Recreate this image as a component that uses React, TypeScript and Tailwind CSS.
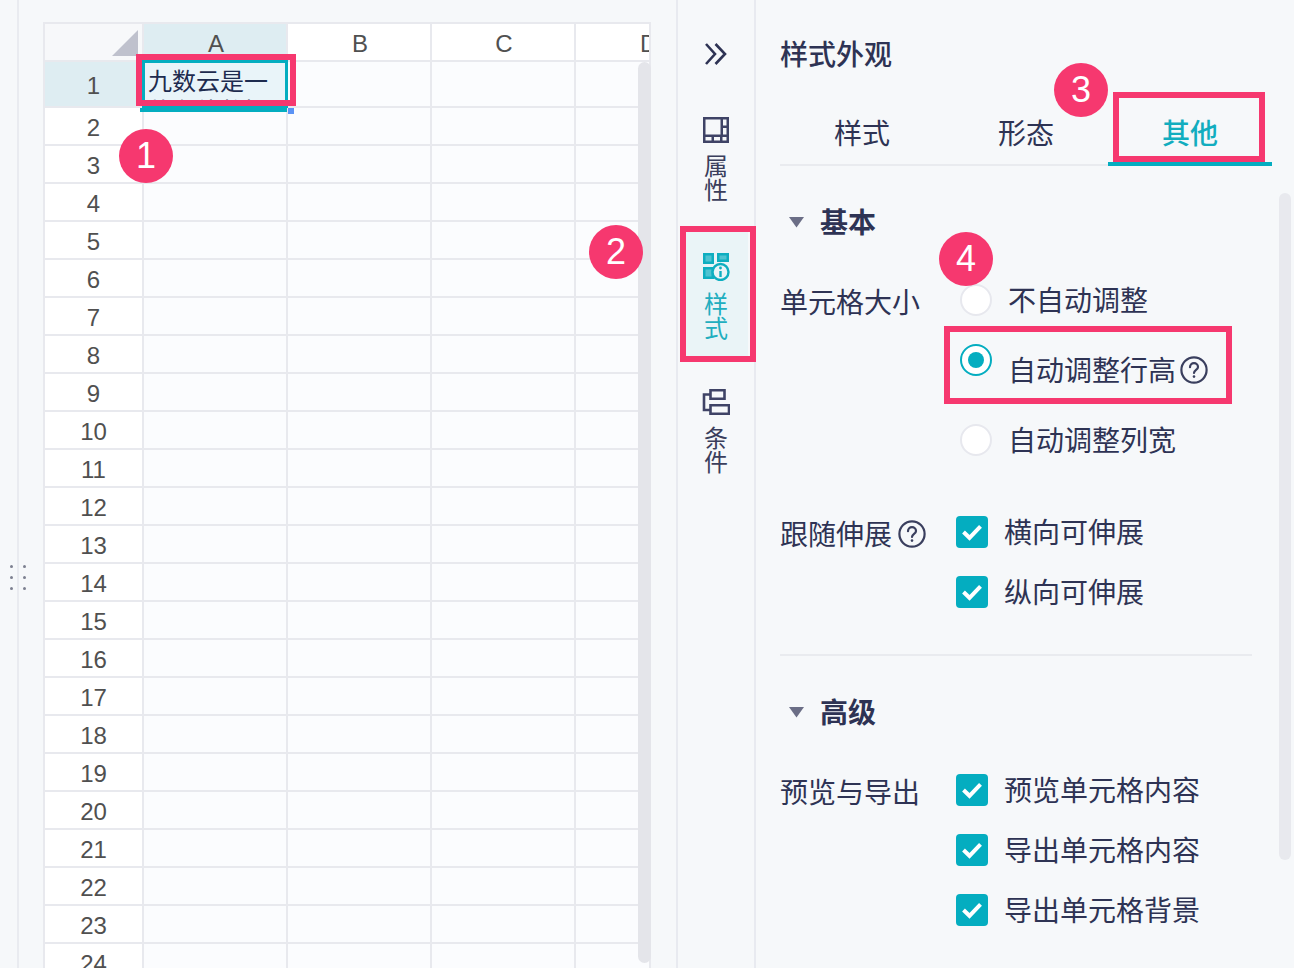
const FONT = "font-['Noto_Sans_CJK_SC','Noto_Sans',sans-serif]";

function Badge({ n, cls }: { n: number; cls: string }) {
  return (
    <div className={`absolute w-[54px] h-[54px] rounded-full bg-[#f6386f] text-white flex items-center justify-center text-[36px] font-['Liberation_Sans',sans-serif] ${cls}`}>
      {n}
    </div>
  );
}

function Help({ cls = "" }: { cls?: string }) {
  return (
    <svg width="28" height="28" viewBox="0 0 28 28" fill="none" stroke="#3a3f5e" strokeWidth="2.2" className={`shrink-0 ${cls}`}>
      <circle cx="14" cy="14" r="12.6" />
      <path d="M10 11.2c0-2.4 1.8-4 4-4s4 1.6 4 3.7c0 2.8-4 3-4 6" strokeLinecap="round" />
      <circle cx="14" cy="20.6" r="1.3" fill="#3a3f5e" stroke="none" />
    </svg>
  );
}

function Check({ label }: { label: string }) {
  return (
    <div className="flex items-center h-8 gap-4">
      <div className="w-8 h-8 rounded-[4px] bg-[#04adc0] flex items-center justify-center">
        <svg width="22" height="18" viewBox="0 0 22 18" fill="none" stroke="#fff" strokeWidth="4">
          <path d="M2.500 9l6 5.800L19.500 3.400" />
        </svg>
      </div>
      <span className="text-[28px] leading-9 mb-[2px] text-[#2e3354]">{label}</span>
    </div>
  );
}

function Radio() {
  return <div className="w-8 h-8 rounded-full bg-white border-2 border-[#e7e8ee] shrink-0" />;
}

function SectionHead({ title }: { title: string }) {
  return (
    <div className="flex items-center h-9">
      <svg width="16" height="11" viewBox="0 0 16 11" className="ml-[9px]">
        <path d="M0 0h15L7.5 10.5z" fill="#6b6e86" />
      </svg>
      <span className="ml-[15px] mb-[2px] text-[28px] font-bold text-[#2e3354] leading-9">{title}</span>
    </div>
  );
}

const rows = Array.from({ length: 24 }, (_, i) => i + 1);

function Sheet() {
  return (
    <div className="w-[608px] h-[946px] overflow-hidden border-l-2 border-t-2 border-[#e8e9ee] bg-white relative">
      <div className="grid grid-cols-[99px_144px_144px_144px_75px] font-['Liberation_Sans',sans-serif] text-[#505050]">
        <div className="h-[38px] bg-[#f7f8fa] border-r-2 border-b-2 border-[#e8e9ee] relative">
          <svg width="26" height="26" viewBox="0 0 26 26" className="absolute left-[67px] top-[6px]">
            <path d="M26 0v26H0z" fill="#bfc1cd" />
          </svg>
        </div>
        <div className="h-[38px] bg-[#deedf2] border-r-2 border-b-2 border-[#e8e9ee] text-[24px] leading-10 text-center pl-[2px]">A</div>
        <div className="h-[38px] border-r-2 border-b-2 border-[#e8e9ee] text-[24px] leading-10 text-center pl-[2px]">B</div>
        <div className="h-[38px] border-r-2 border-b-2 border-[#e8e9ee] text-[24px] leading-10 text-center pl-[2px]">C</div>
        <div className="h-[38px] border-r-2 border-b-2 border-[#e8e9ee] text-[24px] leading-10 overflow-hidden pl-[64px]">D</div>
        {rows.map((r) => (
          <div key={r} className="contents">
            <div className={`border-r-2 border-b-2 border-[#e8e9ee] text-[24px] flex items-center justify-center pt-1 ${r === 1 ? "h-[46px] bg-[#deedf2]" : "h-[38px] bg-white"}`}>
              {r}
            </div>
            {[0, 1, 2, 3].map((c) =>
              r === 1 && c === 0 ? (
                <div key={c} className={`h-[46px] bg-[#e9f4f9] border-r-2 border-b-2 border-[#e8e9ee] overflow-hidden pl-[4px] text-[24px] leading-[30px] text-[#1d2b4f] ${FONT}`}>
                  <div className="w-[124px] mt-[3px]">九数云是一款在线数据分析</div>
                </div>
              ) : (
                <div key={c} className={`border-r-2 border-b-2 border-[#e8e9ee] bg-[#fbfcfe] ${r === 1 ? "h-[46px]" : "h-[38px]"}`} />
              )
            )}
          </div>
        ))}
      </div>
      <div className="absolute left-[97px] top-[36px] w-[146px] h-[48px] border-[3px] border-[#04adc0]" />
      <div className="absolute left-[95px] top-[84px] w-[147px] h-[4px] bg-[#04adc0]" />
      <div className="absolute left-[243px] top-[84px] w-[6px] h-[6px] bg-[#5b93f5]" />
      <div className="absolute right-0 top-[38px] w-[13px] h-[901px] rounded-full bg-[#e4e5ea]" />
    </div>
  );
}

function RailItem({ icon, a, b, active }: { icon: React.ReactNode; a: string; b: string; active?: boolean }) {
  return (
    <div className={`flex flex-col items-center text-[24px] leading-6 ${active ? "text-[#22aebf]" : "text-[#3a3e5c]"}`}>
      {icon}
      <div className="mt-[10px]">{a}</div>
      <div>{b}</div>
    </div>
  );
}

function Rail() {
  return (
    <div className={`w-[80px] h-full shrink-0 border-x-2 border-[#e8eaf0] flex flex-col items-center pt-[42px] ${FONT}`}>
      <svg width="24" height="24" viewBox="0 0 24 24" fill="none" stroke="#2e3354" strokeWidth="2.600">
        <path d="M2 2l9 10-9 10M11.500 2l9.500 10-9.500 10" />
      </svg>
      <div className="mt-[51px]">
        <RailItem
          a="属"
          b="性"
          icon={
            <svg width="26" height="26" viewBox="0 0 26 26" fill="#3f4366">
              <path fillRule="evenodd" d="M0 0h26v26H0zM2.500 2.500v15h15v-15zM20 2.500v6h3.500v-6zM20 11v6.500h3.500V11zM2.500 20v3.500h6V20zM11 20v3.500h6V20zM19.500 20v3.500h4V20z" />
            </svg>
          }
        />
      </div>
      <div className="mt-[31px] w-[64px] h-[124px] bg-[#eaf4f7] pt-[21px]">
        <RailItem
          active
          a="样"
          b="式"
          icon={
            <svg width="28" height="28" viewBox="0 0 28 28">
              <path fill="#0eaec0" d="M1 0h11v11H1zM15 0h12v9h-12zM1 14h11v12H1z" />
              <path fill="#4fc3d1" d="M3.500 2.500h6v6h-6zM17.500 2.500h7v4h-7zM3.500 16.500h6v7h-6z" />
              <circle cx="18.500" cy="19" r="8" fill="#eaf4f7" stroke="#0eaec0" strokeWidth="2.400" />
              <path d="M18.500 18v6" stroke="#0eaec0" strokeWidth="2.400" />
              <circle cx="18.500" cy="15" r="1.400" fill="#0eaec0" />
            </svg>
          }
        />
      </div>
      <div className="mt-[33px]">
        <RailItem
          a="条"
          b="件"
          icon={
            <svg width="28" height="26" viewBox="0 0 28 26" fill="none" stroke="#3f4366" strokeWidth="2.600">
              <path d="M8.500 1.300h14v8.500h-14zM8.500 16.300h18.500v8.500H8.500zM8.500 5.500H2v15.500h6.500" />
            </svg>
          }
        />
      </div>
    </div>
  );
}

function Tab({ label, active }: { label: string; active?: boolean }) {
  return (
    <div className={`w-[164px] h-[56px] flex items-start justify-center pt-1 -mb-[2px] ${active ? "text-[#12adbf] font-medium border-b-4 border-[#04adc0]" : "text-[#2e3354]"}`}>
      <span className="leading-9">{label}</span>
    </div>
  );
}

function Panel() {
  return (
    <div className={`flex-1 pl-[24px] pt-[36px] ${FONT} text-[#2e3354] text-[28px]`}>
      <div className="h-9 leading-[34px] font-medium">样式外观</div>
      <div className="w-[492px] h-[94px] border-b-2 border-[#e9ebef] flex items-end">
        <Tab label="样式" />
        <Tab label="形态" />
        <Tab label="其他" active />
      </div>
      <div className="w-[472px]">
        <div className="mt-[38px]"><SectionHead title="基本" /></div>
        <div className="mt-[44px] flex">
          <div className="w-[176px] h-9 leading-[34px]">单元格大小</div>
          <div className="pl-1">
            <div className="flex items-center h-8 gap-4"><Radio /><span className="leading-9 mb-[2px]">不自动调整</span></div>
            <div className="flex items-start h-[44px] mt-7 gap-4">
              <div className="w-8 h-8 rounded-full bg-white border-2 border-[#04adc0] flex items-center justify-center shrink-0">
                <div className="w-4 h-4 rounded-full bg-[#04adc0]" />
              </div>
              <span className="leading-9 mt-[7px] whitespace-nowrap">自动调整行高</span>
              <Help cls="mt-3 -ml-3" />
            </div>
            <div className="flex items-center h-8 mt-9 gap-4"><Radio /><span className="leading-9 mb-[2px]">自动调整列宽</span></div>
          </div>
        </div>
        <div className="mt-[60px] flex">
          <div className="w-[176px] h-9 flex items-center">
            <span className="leading-9 mb-[2px]">跟随伸展</span>
            <Help cls="ml-1.5" />
          </div>
          <div className="flex flex-col gap-7">
            <Check label="横向可伸展" />
            <Check label="纵向可伸展" />
          </div>
        </div>
        <div className="mt-[46px] h-[2px] bg-[#e9ebef]" />
        <div className="mt-[38px]"><SectionHead title="高级" /></div>
        <div className="mt-[44px] flex">
          <div className="w-[176px] h-9 leading-[34px]">预览与导出</div>
          <div className="flex flex-col gap-7">
            <Check label="预览单元格内容" />
            <Check label="导出单元格内容" />
            <Check label="导出单元格背景" />
          </div>
        </div>
      </div>
    </div>
  );
}

export default function App() {
  return (
    <div className="relative w-[1294px] h-[968px] overflow-hidden bg-[#f6f8fa] flex">
      <div className="w-[19px] h-full shrink-0 border-r-2 border-[#e9ebf0]" />
      <div className="w-[657px] shrink-0 pl-[24px] pt-[22px]">
        <Sheet />
      </div>
      <Rail />
      <Panel />

      {/* panel scrollbar */}
      <div className="absolute left-[1279px] top-[193px] w-[12px] h-[667px] rounded-full bg-[#e8e9ee]" />

      {/* drag handle dots */}
      <div className="absolute left-[10px] top-[565px] grid grid-cols-2 gap-x-[10px] gap-y-[8px]">
        {[0, 1, 2, 3, 4, 5].map((i) => (
          <div key={i} className="w-[3px] h-[3px] rounded-full bg-[#7d8090]" />
        ))}
      </div>

      {/* annotations */}
      <div className="absolute left-[136px] top-[54px] w-[160px] h-[52px] border-[6px] border-[#f6386f]" />
      <div className="absolute left-[680px] top-[226px] w-[76px] h-[136px] border-[6px] border-[#f6386f]" />
      <div className="absolute left-[1113px] top-[92px] w-[152px] h-[70px] border-[6px] border-[#f6386f]" />
      <div className="absolute left-[944px] top-[326px] w-[288px] h-[78px] border-[6px] border-[#f6386f]" />
      <Badge n={1} cls="left-[119px] top-[129px]" />
      <Badge n={2} cls="left-[589px] top-[225px]" />
      <Badge n={3} cls="left-[1054px] top-[63px]" />
      <Badge n={4} cls="left-[939px] top-[232px]" />
    </div>
  );
}
